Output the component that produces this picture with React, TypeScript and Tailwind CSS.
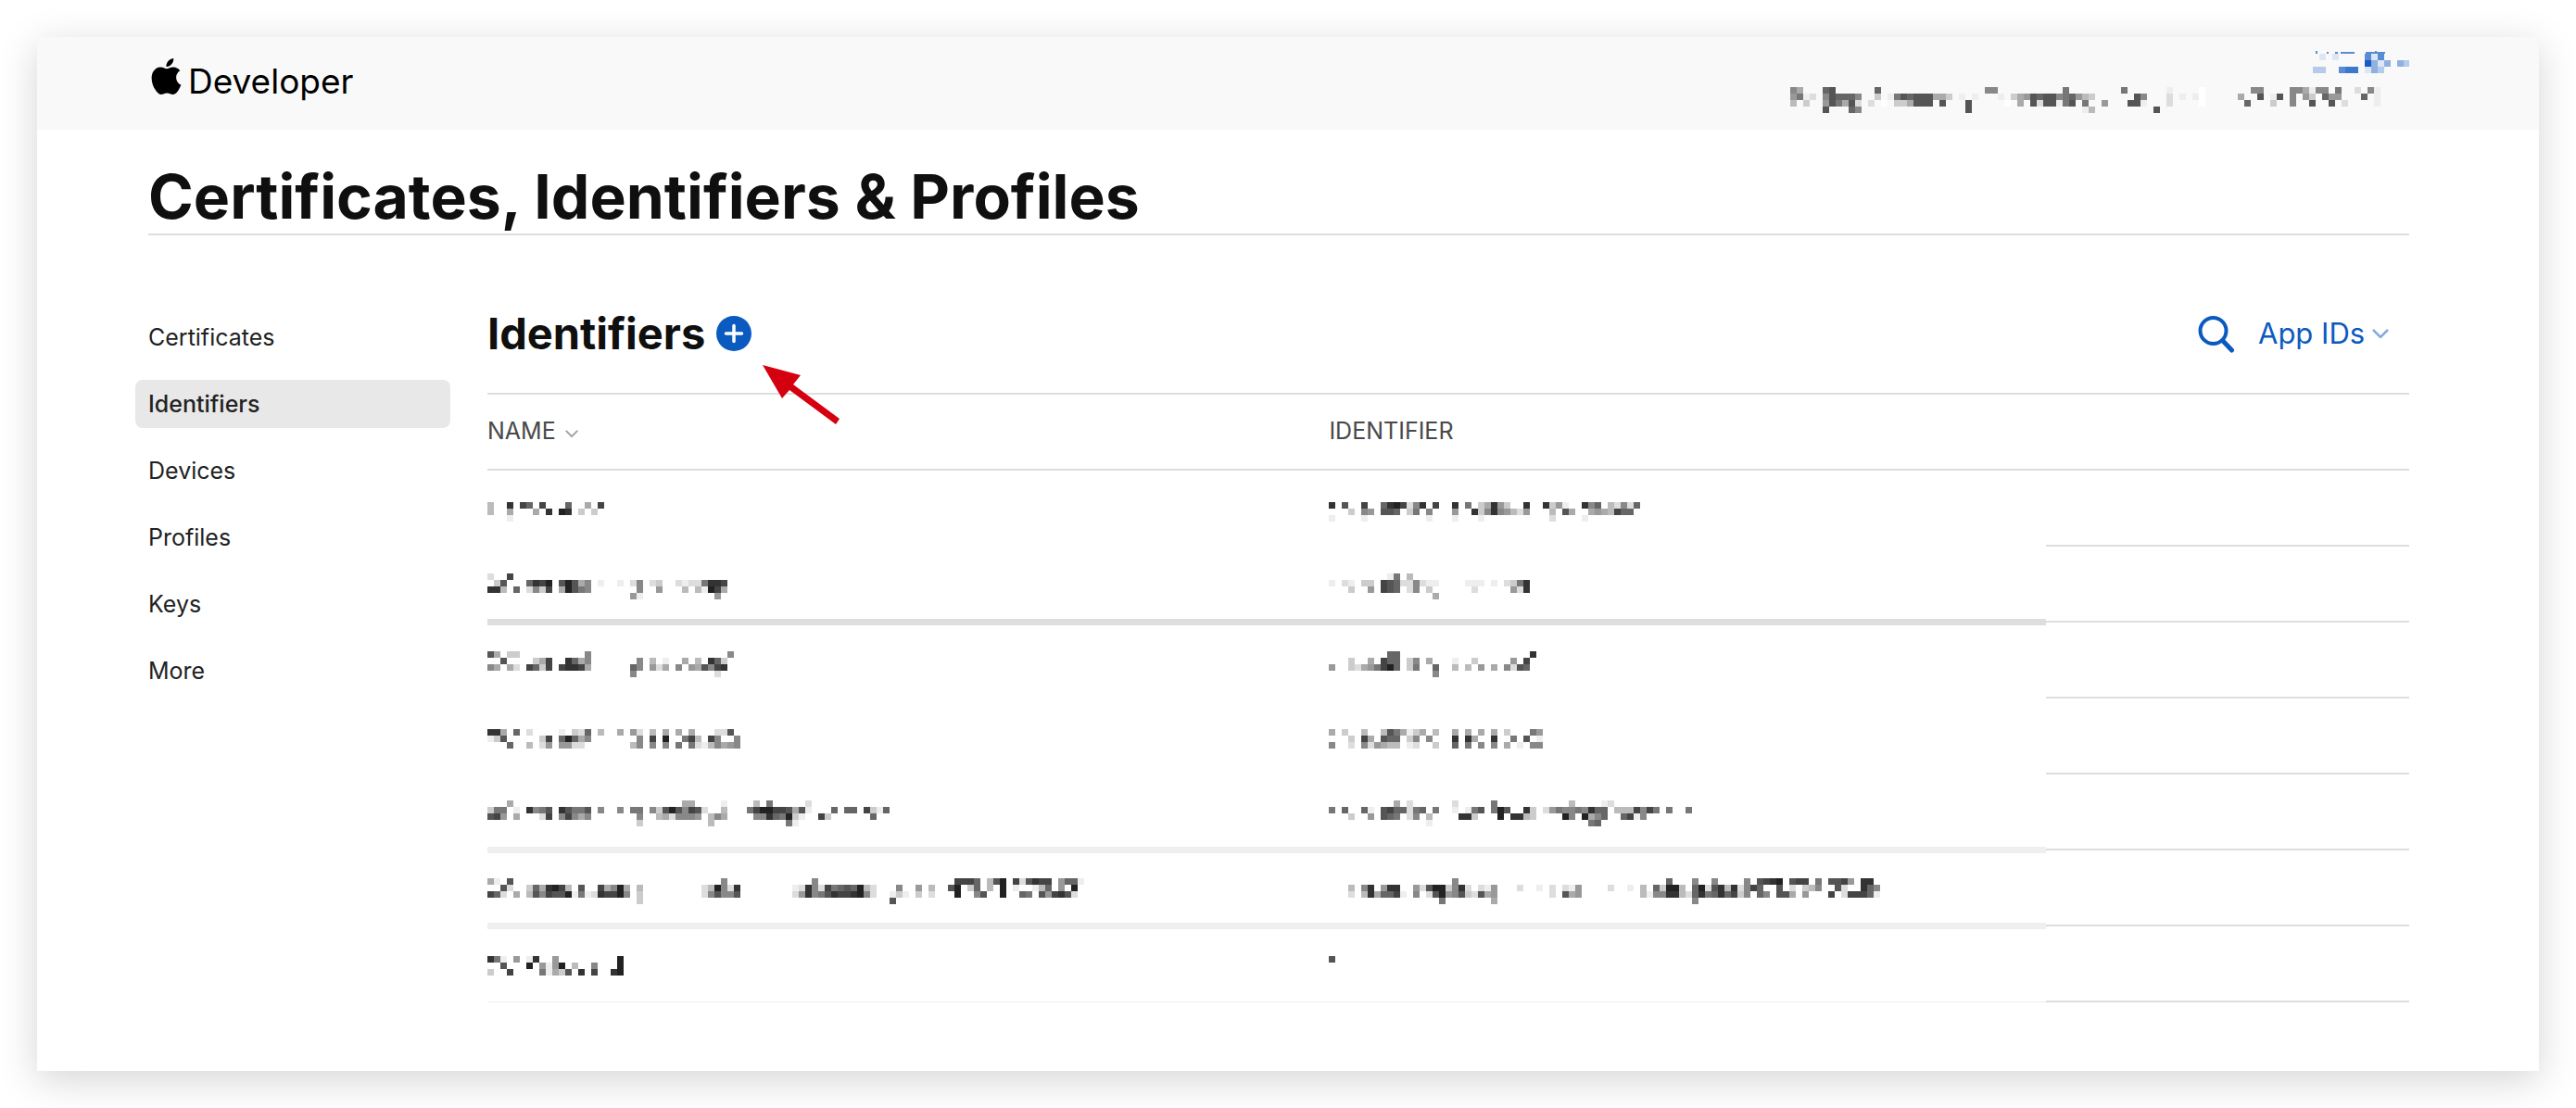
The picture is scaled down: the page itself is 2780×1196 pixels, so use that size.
import { SiApple } from "react-icons/si";

/* Pixelated strips: each line lists "column:shades", one hex digit per 7px block. */
type Strip = string[];

const BLOCK = 7;

function Blocks({
  lines,
  top = 0,
  tint,
}: {
  lines: Strip;
  top?: number;
  tint?: Record<string, string>;
}) {
  return (
    <>
      {lines.flatMap((line, row) =>
        line
          .split(" ")
          .filter(Boolean)
          .flatMap((run) => {
            const [start, shades] = run.split(":");
            return shades.split("").map((shade, i) => {
              const col = Number(start) + i;
              return (
                <rect
                  key={`${row}-${col}`}
                  x={col * BLOCK}
                  y={top + row * BLOCK}
                  width={BLOCK}
                  height={BLOCK}
                  fill={tint ? tint[shade] : `#${shade}${shade}${shade}`}
                />
              );
            });
          })
      )}
    </>
  );
}

const ACCOUNT_TINT: Record<string, string> = {
  a: "#1a5cc4",
  b: "#3c78cc",
  c: "#5a8cd6",
  d: "#8fb0e0",
  e: "#b4cbea",
  f: "#dde7f3",
};

const ACCOUNT: Strip = ["1:f 3:f 8:cfc", "8:adfd 13:de", "0:ee 4:cbb 8:fde"];

const TEAM: Strip = [
  "0:8a 5:65 13:6 30:88 42:7 51:7 58:e 63:f 71:88 77:88ae88 84:7 87:d 89:8e",
  "0:97ed 5:856668 13:c 15:e756555aac 26:e 28:e 32:e 34:ca956558769bc 53:58 58:d 60:e 62:ef 69:a 72:5 74:e5 77:8 79:9cf699 88:6 90:e",
  "0:b 2:c 5:957a5d 12:d 14:f 16:cca555 23:5 27:5 33:f 35:a 37:5d55e75 45:7 48:9 52:55e 58:d 63:f 70:6 74:c 77:8 80:5 83:5 85:d 90:e",
  "5:5 9:68 27:5 45:eb 56:5",
];

type Row = {
  top: number;
  name: Strip;
  identifier: Strip;
  smear?: "dark" | "light" | "hairline";
};

const ROWS: Row[] = [
  {
    top: 34,
    name: ["0:b 3:3 5:46 8:4 12:6 15:a 17:4", "0:b 3:a 7:a 9:3 11:23 14:c 16:c", "3:e"],
    identifier: [
      "0:3 2:5 5:4 8:6324d83 16:4 19:3 21:7 23:ca39c 30:3 33:3c9e 39:386 43:bd8d6",
      "3:c 5:89 8:556 12:c7 15:8 19:9 22:3c8389bd9 34:b 36:5a 40:a9ab466",
      "0:e 5:e 15:e 19:e 23:e 30:f 34:d 39:e",
    ],
  },
  {
    top: 29,
    name: [
      "0:d 3:4 15:f",
      "0:fc5 6:6342 11:525a8 17:e 20:e 22:d8 25:dcf 29:dedd7334",
      "0:33b 4:6 6:d8c4 11:a2578 23:8 26:9 30:b 32:be24a",
      "22:9e 35:9",
    ],
    identifier: [
      "9:e7 12:b",
      "0:e 2:de 5:cc 8:456dd8dee 21:ee 23:e 25:e 27:dc73",
      "1:f 3:c 6:9 8:456 12:d8 15:c 22:d 28:9d3",
      "15:fa",
    ],
    smear: "dark",
  },
  {
    top: 31,
    name: [
      "0:5a 3:cc 15:8 37:8",
      "2:5 6:fca4 12:36a8 23:8 25:b 27:e 30:a 32:b 34:36c",
      "0:8a 3:ad 6:46c4 11:4334a 22:68 25:9da 29:8 31:9a5843",
      "22:8 35:d",
    ],
    identifier: [
      "9:66 12:f 31:3",
      "1:f 3:c 6:a 8:466 12:c8 15:a 19:e 22:c 28:9 30:4",
      "0:9 3:cda97426 12:c7 16:6 19:b 21:b 23:9 25:a 27:8d56",
      "16:8",
    ],
  },
  {
    top: 33,
    name: [
      "0:33a 4:6 6:d 8:ff 11:efcd6 17:b 20:a 22:9d 25:b 27:a 29:a 31:a 33:f 35:dd5",
      "0:ec5 8:c4 11:626a8 23:8 25:4 27:2 30:74b 34:48f 38:8",
      "0:f 3:6 6:b 8:d9 11:99dd 22:b8 25:8 27:8 29:7 31:7deb8a98",
    ],
    identifier: [
      "0:a 2:cf 5:b 8:b57aeca 16:b 19:a 21:a 23:a 25:a 27:c 31:79",
      "3:c 5:4a 8:566 12:c8 15:8 19:3 21:3a 25:3 28:7 30:5 32:e",
      "0:8 3:d 5:8d9abb 12:ed 16:c 19:6 21:7 23:8 25:8 27:a 29:e 31:88",
    ],
  },
  {
    top: 28,
    name: [
      "3:a 25:f 30:aa 36:e 41:b 43:7 49:d 60:f",
      "0:c77 4:e 6:3875 11:35775 17:8 20:8 22:77 25:8c525845d 36:b 40:7422445a5e 53:6 55:66 58:4ce6f",
      "0:549 4:a 7:fd4 11:848a8 23:8 26:bad8889 34:b8a 41:883672ce 51:4c 59:6f",
      "23:c 34:b 46:7e",
    ],
    identifier: [
      "10:a 12:d 19:d 25:7 37:b 42:ed",
      "0:7 2:6 5:6e 8:5466d77 14:6 16:7 19:e 21:e75 25:725 30:3c 33:d978878366 44:bbb4847 52:7 55:7",
      "1:f 3:c 5:f9 8:567 12:d8 15:b 20:33c 26:2 28:33bc 36:28 39:2a86 45:64e8 53:f",
      "15:e 40:76",
    ],
    smear: "light",
  },
  {
    top: 30,
    name: [
      "0:ae 3:5 36:8 50:8 62:f 65:f 72:4446 77:b52 81:4d534 86:4 88:966e",
      "2:5d 6:c6a324b 14:5f 17:4a82a 23:b 26:f 33:db28d3 47:ed38d4765 56:62bd 63:8 66:9 68:b 71:52 74:c6 77:b 79:2 81:e 84:eb6 88:9 90:2",
      "0:46d 4:a 6:b584552e 14:7ed34428 23:c 32:fd85885 47:d93875344328d 62:ece 66:c 68:d 72:2f 75:85 79:2 82:67 85:59435d 92:f",
      "23:c 62:5",
    ],
    identifier: [
      "19:8 52:6 56:8 59:8 64:8 66:5432 71:544 75:7 77:5549 82:33",
      "1:f 3:bf83 8:933 13:9d522c83d 23:de9 29:d 32:e 34:d 36:de9f 43:d 46:e 48:b 50:6c22b 56:62d53b3d846 69:5 71:d 73:cb8 78:5d 82:368",
      "0:f 3:d 5:b3a664e 13:8 15:d529 19:85cd5a9 28:f 32:f 34:d 36:5a9 42:ff 46:ffbe8833bd6376364c8 66:68 69:55a 73:9 77:4 79:d4446e 86:f",
      "17:7 25:a 56:8",
    ],
    smear: "light",
  },
  {
    top: 32,
    name: [
      "0:37e 4:9 6:e3 10:9 20:2",
      "1:f5 6:2 8:9e92 13:b 16:8 20:2",
      "0:cf 3:4 6:f 8:7eac5 14:3 16:4 19:32",
    ],
    identifier: ["0:5"],
    smear: "hairline",
  },
];

const NAV = ["Certificates", "Identifiers", "Devices", "Profiles", "Keys", "More"];

function Chevron({ className }: { className: string }) {
  return (
    <svg viewBox="0 0 18 10" fill="none" stroke="currentColor" strokeWidth="2.500" className={className} aria-hidden="true">
      <path d="M1 1l8 8 8-8" />
    </svg>
  );
}

function Smear({ kind }: { kind: Row["smear"] }) {
  if (kind === "dark") return <span className="absolute inset-x-0 -bottom-[3px] h-[7px] bg-[#dedede]" />;
  if (kind === "light") return <span className="absolute inset-x-0 -bottom-[3px] h-[7px] bg-[#efefef]" />;
  if (kind === "hairline") return <span className="absolute inset-x-0 bottom-0 h-px bg-[#ebefe9]" />;
  return null;
}

function HiddenCell({ lines, row, label }: { lines: Strip; row: Row; label: string }) {
  return (
    <td className="relative p-0 align-top">
      <svg height="80" className="block w-full" role="img" aria-label={label} shapeRendering="crispEdges">
        <Blocks lines={lines} top={row.top} />
      </svg>
      <Smear kind={row.smear} />
    </td>
  );
}

export default function App() {
  return (
    <div className="bg-white p-10 font-['Inter',sans-serif] text-[#0f0f0f]">
      <div className="bg-white pb-[74px] shadow-[0_10px_40px_rgba(0,0,0,0.17)]">
        <header className="flex h-[100px] justify-between bg-[#f9f9f9] pr-[140px] pl-[120px]">
          <a href="#" className="flex h-24 items-center gap-1 text-black">
            <SiApple className="mb-3 size-[39px]" aria-label="Apple" />
            <span className="text-[37px] leading-[48px]">Developer</span>
          </a>
          <div className="flex flex-col items-end pt-[15px]">
            <svg width="104" height="24" role="img" aria-label="Account name" shapeRendering="crispEdges">
              <path d="M3 0h2v3h-2zM15 1h2v2h-2zM24 1h3v2h-3zM30 1h15v2h-15zM57 1h21v2h-21zM67 0h2v3h-2z" fill="#5a8cd6" />
              <Blocks lines={ACCOUNT} top={3} tint={ACCOUNT_TINT} />
            </svg>
            <svg width="668" height="28" className="mt-[15px]" role="img" aria-label="Team name" shapeRendering="crispEdges">
              <Blocks lines={TEAM} />
            </svg>
          </div>
        </header>

        <div className="pr-[140px] pl-[120px]">
          <h1 className="border-b-2 border-[#dedede] pt-8 text-[66px] leading-[80px] font-bold">
            Certificates, Identifiers &amp; Profiles
          </h1>

          <div className="flex gap-10">
            <nav className="-ml-3.5 flex w-[340px] shrink-0 flex-col gap-5 pt-[84px] text-[25px] leading-[52px] text-[#222]">
              {NAV.map((item) =>
                item === "Identifiers" ? (
                  <a key={item} href="#" aria-current="page" className="rounded-lg bg-[#e8e8e8] px-3.5 font-medium">
                    {item}
                  </a>
                ) : (
                  <a key={item} href="#" className="px-3.5">
                    {item}
                  </a>
                )
              )}
            </nav>

            <main className="min-w-0 flex-1 pt-20">
              <div className="flex items-center justify-between pb-[38px]">
                <div className="relative flex items-center gap-3">
                  <h2 className="text-[47px] leading-[52px] font-bold">Identifiers</h2>
                  <button type="button" aria-label="Register a new identifier" className="size-[38px] rounded-full bg-[#0b5abf]">
                    <svg viewBox="0 0 38 38" fill="none" stroke="#fff" strokeWidth="3.500" strokeLinecap="round">
                      <path d="M19 10.500v17M10.500 19h17" />
                    </svg>
                  </button>
                  <svg width="84" height="67" className="absolute top-[59px] left-full ml-3" aria-hidden="true">
                    <path d="M0 1L41 12 33 22 83 59 79 65 29 28 21 37z" fill="#d4000f" />
                  </svg>
                </div>
                <div className="flex items-center gap-6 pr-[22px] text-[#0b5abf]">
                  <button type="button" aria-label="Search">
                    <svg width="42" height="42" viewBox="0 0 42 42" fill="none" stroke="currentColor" strokeLinecap="round">
                      <circle cx="17.500" cy="18" r="14" strokeWidth="4" />
                      <path d="M28 29l9.500 10" strokeWidth="5" />
                    </svg>
                  </button>
                  <label className="relative flex items-center">
                    <span className="absolute size-px overflow-hidden opacity-0" aria-hidden="true" />
                    <select
                      aria-label="Identifier type"
                      className="h-[52px] w-[141px] appearance-none bg-transparent text-[31px]"
                    >
                      <option>App IDs</option>
                    </select>
                    <Chevron className="pointer-events-none absolute right-0 h-2.5 w-[18px] text-[#82abe0]" />
                  </label>
                </div>
              </div>

              <table className="w-full table-fixed border-separate border-spacing-0">
                <colgroup>
                  <col className="w-[43.8%]" />
                  <col className="w-[37.3%]" />
                  <col />
                </colgroup>
                <thead>
                  <tr className="h-[84px] text-left text-[25px] text-[#494949]">
                    <th scope="col" className="border-y-2 border-[#dedede] p-0 font-normal">
                      <button type="button" className="flex items-center gap-2.5">
                        NAME
                        <Chevron className="mt-1 h-2 w-3.5 text-[#a0a0a0]" />
                      </button>
                    </th>
                    <th scope="col" className="border-y-2 border-[#dedede] p-0 font-normal">
                      IDENTIFIER
                    </th>
                    <td className="border-y-2 border-[#dedede] p-0" />
                  </tr>
                </thead>
                <tbody>
                  {ROWS.map((row, i) => (
                    <tr key={i} className="h-[82px]">
                      <HiddenCell lines={row.name} row={row} label="Hidden name" />
                      <HiddenCell lines={row.identifier} row={row} label="Hidden identifier" />
                      <td className="border-b-2 border-[#dedede] p-0" />
                    </tr>
                  ))}
                </tbody>
              </table>
            </main>
          </div>
        </div>
      </div>
    </div>
  );
}
